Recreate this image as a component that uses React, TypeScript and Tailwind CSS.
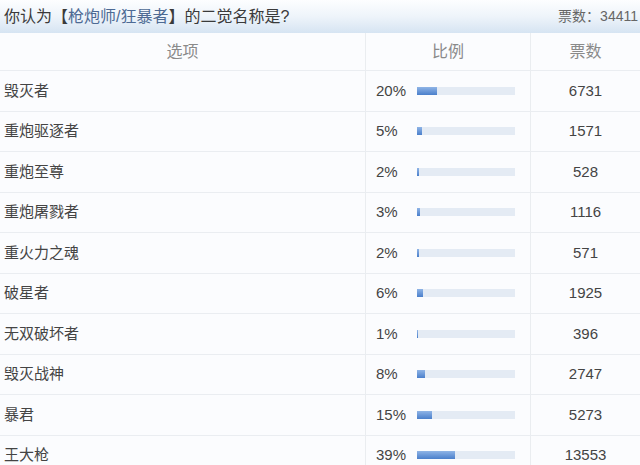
import React from "react"

const ROWS: { name: string; pct: number; votes: number }[] = [
  { name: "毁灭者", pct: 20, votes: 6731 },
  { name: "重炮驱逐者", pct: 5, votes: 1571 },
  { name: "重炮至尊", pct: 2, votes: 528 },
  { name: "重炮屠戮者", pct: 3, votes: 1116 },
  { name: "重火力之魂", pct: 2, votes: 571 },
  { name: "破星者", pct: 6, votes: 1925 },
  { name: "无双破坏者", pct: 1, votes: 396 },
  { name: "毁灭战神", pct: 8, votes: 2747 },
  { name: "暴君", pct: 15, votes: 5273 },
  { name: "王大枪", pct: 39, votes: 13553 },
]

export default function App() {
  return (
    <div
      className="h-[465px] w-[640px] overflow-hidden bg-[#fbfcfe] text-[#444]"
      style={{ fontFamily: '"Liberation Sans", "Noto Sans CJK SC", sans-serif' }}
    >
      {/* title bar */}
      <div className="flex h-[33px] items-center bg-gradient-to-b from-[#fdfeff] via-[#eef4fa] to-[#d6e4f2] pl-1">
        <div className="text-[16px] text-[#3a3a3a]">
          你认为【<span className="text-[#4d6a94]">枪炮师/狂暴者</span>】的二觉名称是?
        </div>
        <div className="ml-auto shrink-0 whitespace-nowrap pr-[2px] text-[14px] text-[#666]">
          票数：34411
        </div>
      </div>

      {/* header */}
      <div className="flex h-[37px] text-[16px] text-[#8a8a8a]">
        <div className="flex w-[365px] items-center justify-center">选项</div>
        <div className="flex w-[165px] items-center justify-center border-l border-[#eaedf0]">比例</div>
        <div className="flex flex-1 items-center justify-center border-l border-[#eaedf0]">票数</div>
      </div>

      {ROWS.map((r) => (
        <div key={r.name} className="flex h-[40.5px] border-t border-[#eaedf1] text-[15px]">
          <div className="flex w-[365px] items-center pl-1 text-[#444]">{r.name}</div>
          <div className="flex w-[165px] items-center border-l border-[#eaedf0] pl-[10px]">
            <span className="w-[41px] text-[#444]">{r.pct}%</span>
            <div className="h-[8px] w-[98px] bg-[#e4ebf4]">
              <div
                className="h-full bg-gradient-to-b from-[#8fb4e6] to-[#4a7fcb]"
                style={{ width: `${Math.max(r.pct, 1.2)}%` }}
              />
            </div>
          </div>
          <div className="flex flex-1 items-center justify-center border-l border-[#eaedf0] text-[#444]">
            {r.votes}
          </div>
        </div>
      ))}
    </div>
  )
}
